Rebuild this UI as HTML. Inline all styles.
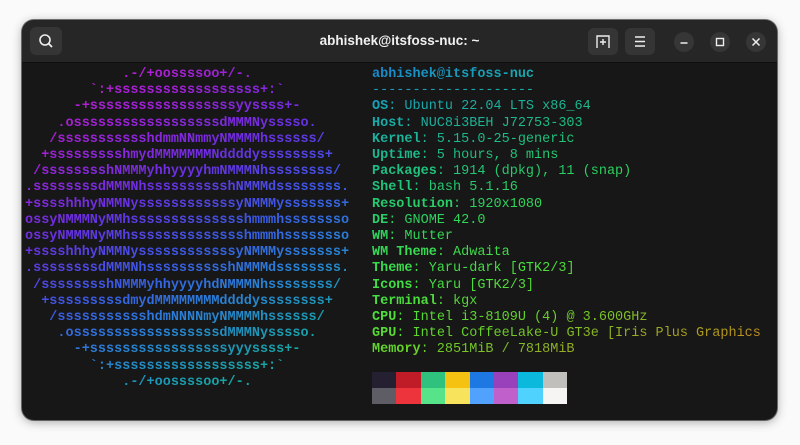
<!DOCTYPE html>
<html><head><meta charset="utf-8"><style>
html,body{margin:0;padding:0;width:800px;height:445px;background:#fafafa;overflow:hidden;font-family:"Liberation Sans",sans-serif}
.win{position:absolute;left:22px;top:20px;width:755px;height:400px;border-radius:12px;background:#171717;box-shadow:0 2px 10px rgba(0,0,0,.35),0 0 0 1px rgba(0,0,0,.5);overflow:hidden}
.hdr{position:absolute;left:0;top:0;width:100%;height:42px;background:#262626;border-bottom:1px solid #0e0e0e}
.title{position:absolute;left:0;width:100%;top:13px;text-align:center;color:#f0f0f0;font-weight:bold;font-size:13.5px}
.btn{position:absolute;top:8px;width:30px;height:27px;border-radius:6px;background:#353535}
.circ{position:absolute;top:12px;width:20px;height:20px;border-radius:50%;background:#363636}
pre{margin:0;position:absolute;font-family:"Liberation Mono",monospace;font-size:13.5px;line-height:16.2px;-webkit-background-clip:text;background-clip:text;color:transparent}
.ascii{left:3px;top:47px;font-weight:bold;background-image:linear-gradient(155deg,#c81ec8 0%,#a020d8 20%,#6a30e4 38%,#3a5ae6 55%,#2a80d8 68%,#17a4a8 85%,#17b890 100%)}
.info{left:350px;top:47px;background-image:linear-gradient(165deg,#1a85d0 0%,#18a8b0 12%,#1ec080 28%,#30d858 45%,#48e040 60%,#6ad028 75%,#a8a020 88%,#e07a18 100%);}
.info b{font-weight:bold}
.pal{position:absolute;left:350px;top:352px;display:grid;grid-template-columns:repeat(8,24.4px);grid-template-rows:16px 16px}
</style></head><body>
<div class="win">
 <div class="hdr">
  <div class="btn" style="left:8px;width:32px;height:28px;top:7px">
   <svg width="32" height="28" viewBox="0 0 32 28"><circle cx="15" cy="13" r="5" fill="none" stroke="#eee" stroke-width="1.6"/><line x1="18.5" y1="16.5" x2="22" y2="20" stroke="#eee" stroke-width="1.8"/></svg>
  </div>
  <div class="title">abhishek@itsfoss-nuc: ~</div>
  <div class="btn" style="left:566px">
   <svg width="30" height="27" viewBox="0 0 30 27"><path d="M9 20V8h12v12" fill="none" stroke="#eee" stroke-width="1.4"/><path d="M15 11v6M12 14h6" stroke="#eee" stroke-width="1.4"/></svg>
  </div>
  <div class="btn" style="left:603px">
   <svg width="30" height="27" viewBox="0 0 30 27"><path d="M10 9h10M10 13.5h10M10 18h10" stroke="#eee" stroke-width="1.4"/></svg>
  </div>
  <div class="circ" style="left:652px"><svg width="20" height="20"><path d="M6.5 11h7" stroke="#eee" stroke-width="1.5"/></svg></div>
  <div class="circ" style="left:688px"><svg width="20" height="20"><rect x="6.5" y="6.5" width="7" height="7" fill="none" stroke="#eee" stroke-width="1.4"/></svg></div>
  <div class="circ" style="left:724px"><svg width="20" height="20"><path d="M6.5 6.5l7 7M13.5 6.5l-7 7" stroke="#eee" stroke-width="1.5"/></svg></div>
 </div>
<pre class="ascii">            .-/+oossssoo+/-.
        `:+ssssssssssssssssss+:`
      -+ssssssssssssssssssyyssss+-
    .ossssssssssssssssssdMMMNysssso.
   /ssssssssssshdmmNNmmyNMMMMhssssss/
  +ssssssssshmydMMMMMMMNddddyssssssss+
 /sssssssshNMMMyhhyyyyhmNMMMNhssssssss/
.ssssssssdMMMNhsssssssssshNMMMdssssssss.
+sssshhhyNMMNyssssssssssssyNMMMysssssss+
ossyNMMMNyMMhsssssssssssssshmmmhssssssso
ossyNMMMNyMMhsssssssssssssshmmmhssssssso
+sssshhhyNMMNyssssssssssssyNMMMysssssss+
.ssssssssdMMMNhsssssssssshNMMMdssssssss.
 /sssssssshNMMMyhhyyyyhdNMMMNhssssssss/
  +sssssssssdmydMMMMMMMMddddyssssssss+
   /ssssssssssshdmNNNNmyNMMMMhssssss/
    .ossssssssssssssssssdMMMNysssso.
      -+sssssssssssssssssyyyssss+-
        `:+ssssssssssssssssss+:`
            .-/+oossssoo+/-.</pre>
<pre class="info"><b>abhishek</b>@<b>itsfoss-nuc</b>
--------------------
<b>OS</b>: Ubuntu 22.04 LTS x86_64
<b>Host</b>: NUC8i3BEH J72753-303
<b>Kernel</b>: 5.15.0-25-generic
<b>Uptime</b>: 5 hours, 8 mins
<b>Packages</b>: 1914 (dpkg), 11 (snap)
<b>Shell</b>: bash 5.1.16
<b>Resolution</b>: 1920x1080
<b>DE</b>: GNOME 42.0
<b>WM</b>: Mutter
<b>WM Theme</b>: Adwaita
<b>Theme</b>: Yaru-dark [GTK2/3]
<b>Icons</b>: Yaru [GTK2/3]
<b>Terminal</b>: kgx
<b>CPU</b>: Intel i3-8109U (4) @ 3.600GHz
<b>GPU</b>: Intel CoffeeLake-U GT3e [Iris Plus Graphics
<b>Memory</b>: 2851MiB / 7818MiB</pre>
<div class="pal">
<div style="background:#241f31"></div><div style="background:#c01c28"></div><div style="background:#2ec27e"></div><div style="background:#f5c211"></div><div style="background:#1e78e4"></div><div style="background:#9841bb"></div><div style="background:#0ab9dc"></div><div style="background:#c0bfbc"></div>
<div style="background:#5e5c64"></div><div style="background:#ed333b"></div><div style="background:#57e389"></div><div style="background:#f8e45c"></div><div style="background:#51a1ff"></div><div style="background:#c061cb"></div><div style="background:#4fd2fd"></div><div style="background:#f6f5f4"></div>
</div>
</div>
</body></html>
